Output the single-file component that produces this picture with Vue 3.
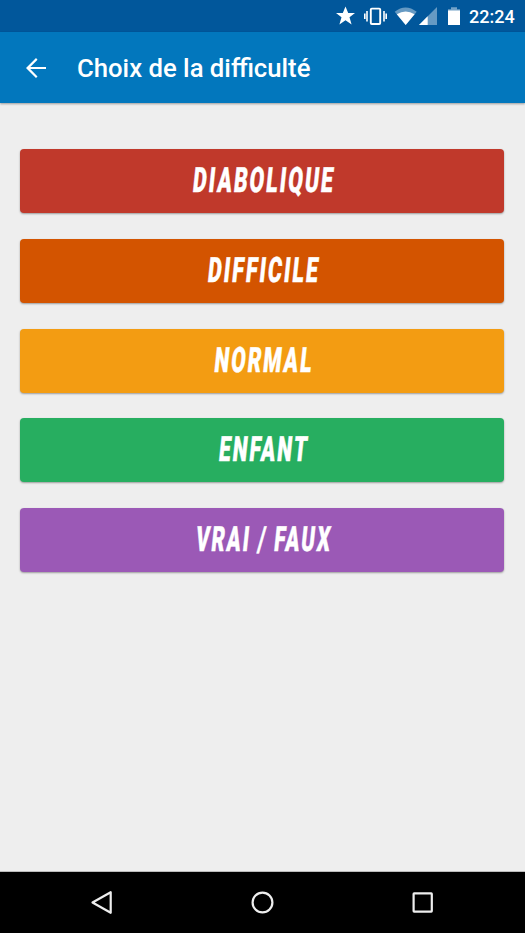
<script setup>
const levels = [
  { label: 'DIABOLIQUE', color: '#c0392b', width: 142 },
  { label: 'DIFFICILE', color: '#d35400', width: 112 },
  { label: 'NORMAL', color: '#f39c12', width: 99 },
  { label: 'ENFANT', color: '#27ae60', width: 90 },
  { label: 'VRAI / FAUX', color: '#9b59b6', width: 136 },
]
</script>

<template>
  <div class="screen">
    <div class="status">
      <svg class="status-icons" viewBox="0 0 134 32" fill="#fff">
        <path d="M10.5 6.4 13.2 13H20l-5.5 4.2 2.1 7.3-6.1-4.3-6.1 4.3 2.1-7.3L1 13h6.8z" />
        <rect x="35.8" y="8.6" width="9.4" height="15.4" rx="1" fill="none" stroke="#fff" stroke-width="1.9" />
        <path d="M32 11v10.5M49 11v10.5M29.8 13.5v5.5M51.2 13.5v5.5" stroke="#fff" stroke-width="1.6" />
        <path d="M59.7 11.8Q70.5 3.2 81.7 11.8L70.7 25z" opacity=".4" />
        <path d="M61.8 14.3Q70.7 8.5 79.6 14.3L70.7 25z" />
        <path d="M102 7v18H84z" opacity=".4" />
        <path d="M92.7 16.3V25H84z" />
        <path d="M113 9.2h3V7.3h6v1.9h3V12h-12z" opacity=".45" />
        <path d="M113 10.5h12V25h-12z" />
      </svg>
      <span class="time">22:24</span>
    </div>
    <header class="toolbar">
      <svg class="back" viewBox="0 0 24 24" fill="#fff">
        <path d="M20 11.2H7.4l5.8-5.9L12 4l-8 8 8 8 1.2-1.3-5.8-5.9H20z" />
      </svg>
      <h1>Choix de la difficulté</h1>
    </header>
    <main class="levels">
      <button v-for="level in levels" :key="level.label" class="level" :style="{ backgroundColor: level.color }">
        <svg class="label" viewBox="0 0 400 64">
          <text
            transform="translate(201 43.3) skewX(-6)"
            text-anchor="middle"
            :textLength="level.width"
            lengthAdjust="spacingAndGlyphs"
          >{{ level.label }}</text>
        </svg>
      </button>
    </main>
    <nav class="nav">
      <svg viewBox="0 0 30 30"><path d="M5.5 14.5 23.7 4.2v20.6z" /></svg>
      <svg viewBox="0 0 30 30"><circle cx="14.5" cy="14.5" r="9.9" /></svg>
      <svg viewBox="0 0 30 30"><rect x="5.6" y="5.4" width="18.2" height="18.2" rx=".5" /></svg>
    </nav>
  </div>
</template>

<style>
body {
  margin: 0;
}
</style>

<style scoped>
.screen {
  display: flex;
  flex-direction: column;
  height: 933px;
  overflow: hidden;
  background: #eee;
  font-family: Roboto, sans-serif;
  color: #fff;
}
.status {
  display: flex;
  align-items: center;
  justify-content: flex-end;
  height: 32px;
  padding-right: 10px;
  background: #01579b;
}
.status-icons {
  width: 134px;
  height: 32px;
}
.time {
  width: 46px;
  padding-top: 1px;
  font-size: 18px;
  font-weight: 500;
  line-height: 32px;
  white-space: nowrap;
}
.toolbar {
  display: flex;
  align-items: center;
  gap: 26px;
  height: 71.4px;
  padding: 1px 0 0 21px;
  background: #0277bd;
  box-sizing: border-box;
  box-shadow: 0 1px 2px rgba(0, 0, 0, 0.35);
}
.back {
  width: 30px;
  height: 30px;
}
h1 {
  margin: 0;
  font-size: 25.7px;
  font-weight: 500;
  line-height: 32px;
  white-space: nowrap;
}
.levels {
  flex: 1;
  display: flex;
  flex-direction: column;
  gap: 25.7px;
  padding: 46px 20.6px 0 20.4px;
}
.level {
  display: flex;
  justify-content: center;
  height: 64px;
  padding: 0;
  border: 0;
  border-radius: 4px;
  box-shadow: 0 1px 2px rgba(0, 0, 0, 0.35);
}
.label {
  width: 400px;
  height: 64px;
  overflow: visible;
  fill: #fff;
  stroke: #fff;
  stroke-width: 0.5;
  font-family: Roboto, sans-serif;
  font-size: 35px;
  font-weight: 900;
  letter-spacing: 3.5px;
}
.nav {
  display: flex;
  justify-content: space-between;
  align-items: center;
  height: 61px;
  padding: 0 87px;
  background: #000;
  border-top: 1px solid #bbb;
}
.nav svg {
  width: 30px;
  height: 30px;
  fill: none;
  stroke: #eee;
  stroke-width: 2.2;
  stroke-linejoin: round;
}
</style>
